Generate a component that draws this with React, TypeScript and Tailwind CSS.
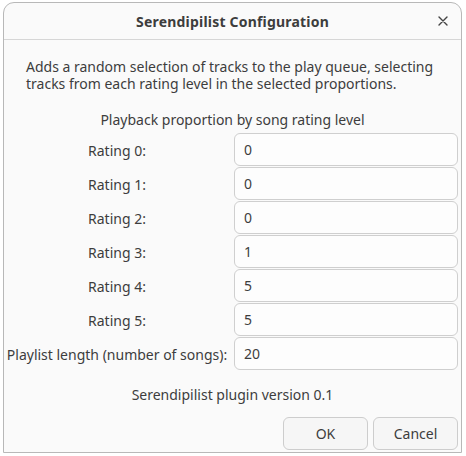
import React from 'react';

const ratings = [
  { label: 'Rating 0:', value: '0' },
  { label: 'Rating 1:', value: '0' },
  { label: 'Rating 2:', value: '0' },
  { label: 'Rating 3:', value: '1' },
  { label: 'Rating 4:', value: '5' },
  { label: 'Rating 5:', value: '5' },
  { label: 'Playlist length (number of songs):', value: '20' },
];

export default function App() {
  return (
    <div
      className="w-[466px] h-[456px] bg-white overflow-hidden pt-[2px] pl-[3px] text-[#3d3d3d]"
      style={{ fontFamily: '"Noto Sans", "Open Sans", sans-serif' }}
    >
      {/* dialog window */}
      <div className="w-[459px] h-[451px] bg-[#fafafa] border border-[#b8b8b8] rounded-t-[11px] flex flex-col">
        <div className="h-[37px] shrink-0 border-b border-[#d6d6d6] flex items-center relative">
          <div className="w-full text-center text-[14px] font-bold tracking-[0.2px]">Serendipilist Configuration</div>
          <button className="absolute right-[10px] top-[10px] w-[16px] h-[16px] flex items-center justify-center text-[#444]">
            <svg width="10" height="10" viewBox="0 0 10 10">
              <path d="M1 1 L9 9 M9 1 L1 9" stroke="currentColor" strokeWidth="1.4" strokeLinecap="round" />
            </svg>
          </button>
        </div>

        <div className="flex flex-col flex-1 text-[14px]">
          <p className="px-[22px] pt-[18px] leading-[17px] text-[14px]">
            Adds a random selection of tracks to the play queue, selecting tracks from each rating level in the selected proportions.
          </p>

          <div className="text-center mt-[19px] leading-[17px]">Playback proportion by song rating level</div>

          <div className="grid grid-cols-[226px_224px] gap-x-[4px] gap-y-[1px] mt-[5px]">
            {ratings.map((r) => (
              <React.Fragment key={r.label}>
                <div className="h-[33px] flex items-center justify-center whitespace-nowrap pt-[2px]">{r.label}</div>
                <div className="h-[33px] rounded-[6px] border border-[#cfcfcf] bg-[#fdfdfd] flex items-center px-[9px]">
                  {r.value}
                </div>
              </React.Fragment>
            ))}
          </div>

          <div className="text-center mt-[16px] leading-[17px]">Serendipilist plugin version 0.1</div>

          <div className="flex justify-end gap-[5px] mt-[14px] pr-[3px]">
            <button className="w-[85px] h-[33px] rounded-[6px] border border-[#cdcdcd] bg-[#f6f6f6]">OK</button>
            <button className="w-[85px] h-[33px] rounded-[6px] border border-[#cdcdcd] bg-[#f6f6f6]">Cancel</button>
          </div>
        </div>
      </div>
    </div>
  );
}
